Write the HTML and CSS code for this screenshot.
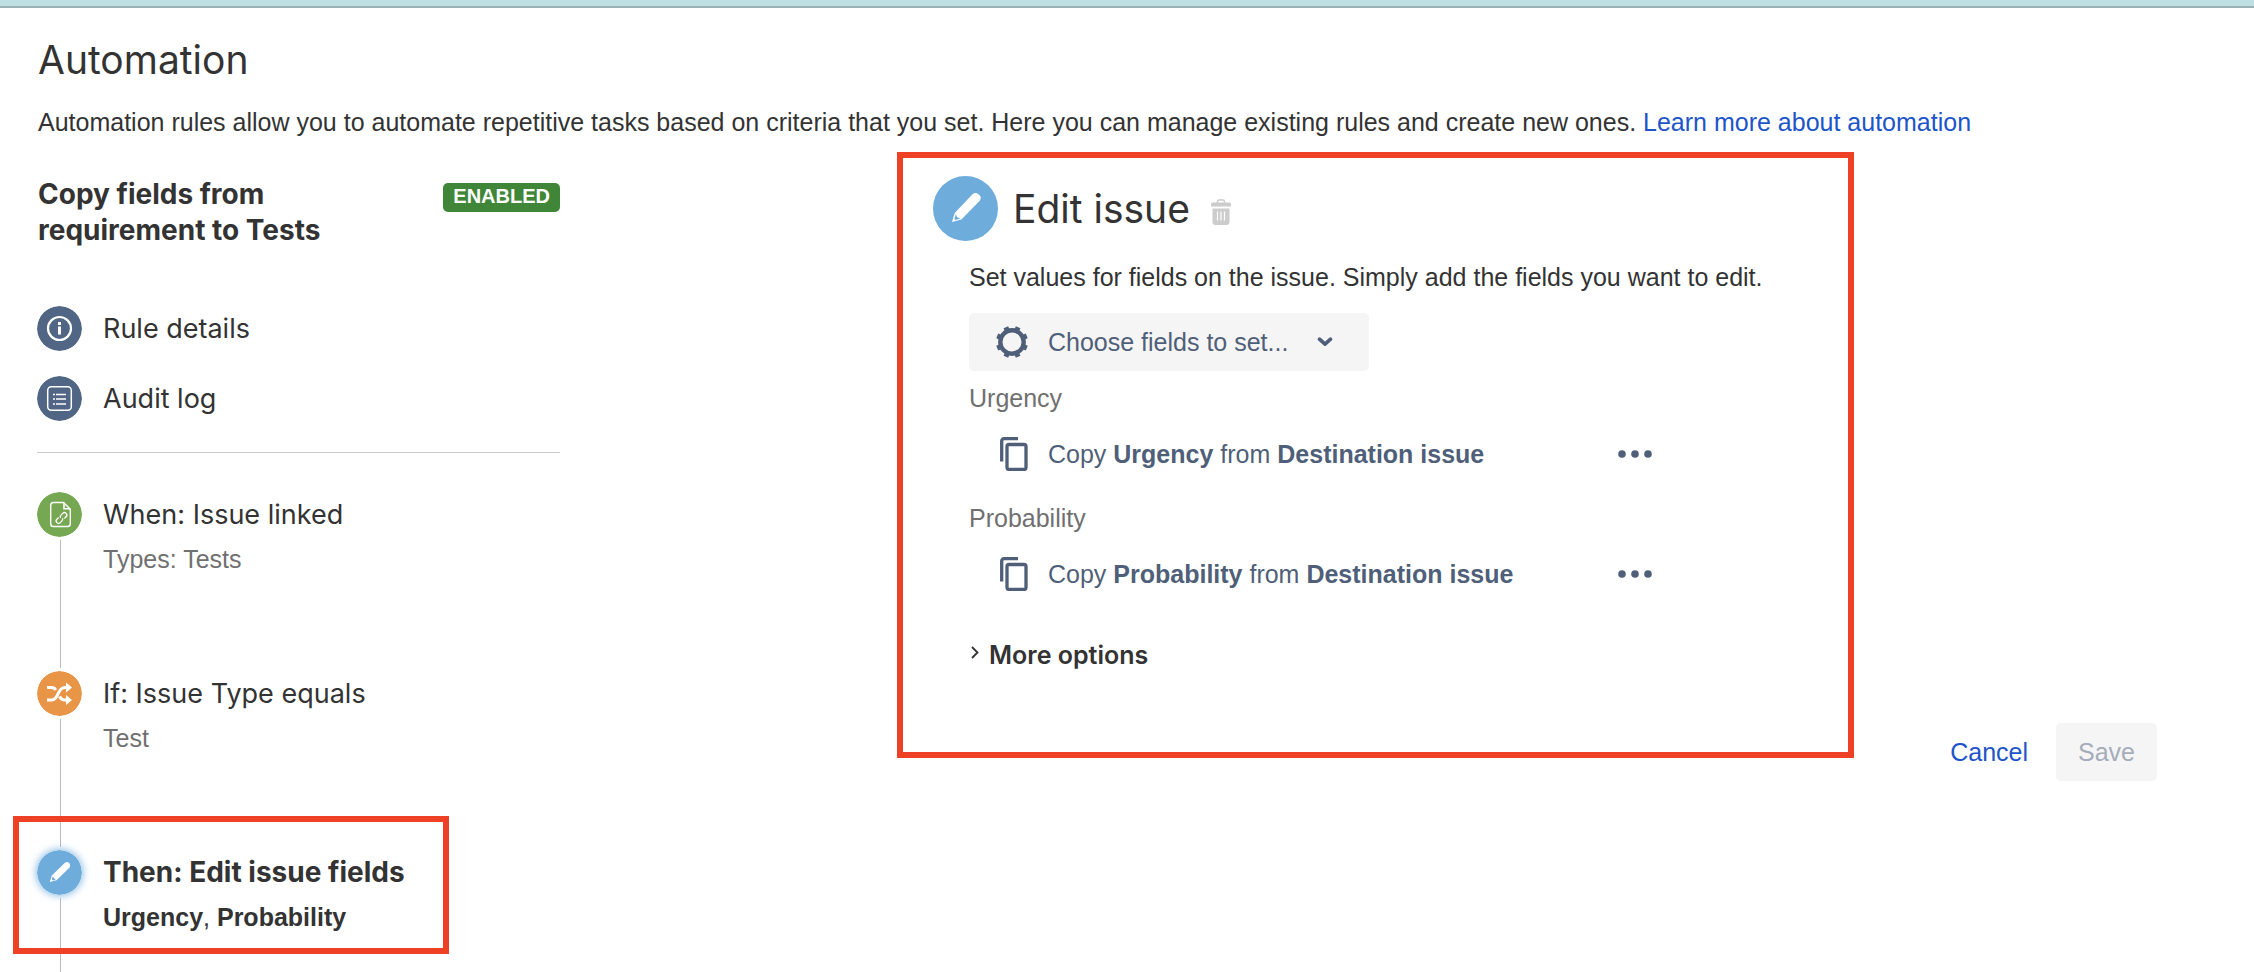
FILE: index.html
```
<!DOCTYPE html>
<html lang="en">
<head>
    <meta charset="UTF-8">
    <meta name="viewport" content="width=device-width, initial-scale=1.0">
    <title>Automation</title>
    <link rel="stylesheet" href="styles.css">
</head>
<body>
    <div class="top-strip"></div>
    <main class="page">
        <h1 class="page-title">Automation</h1>
        <p class="intro">Automation rules allow you to automate repetitive tasks based on criteria that you set. Here you can manage existing rules and create new ones. <a href="#">Learn more about automation</a></p>
        <div class="columns">
            <aside class="sidebar">
                <div class="rule-head">
                    <h2 class="rule-name">Copy fields from requirement to Tests</h2>
                    <span class="badge">ENABLED</span>
                </div>
                <nav class="rule-links">
                    <a class="rule-link" href="#">
                        <svg class="circle-icon" viewBox="0 0 45 45">
                            <circle cx="22.5" cy="22.5" r="22.5" fill="#506684"/>
                            <circle cx="22.5" cy="22.5" r="11.5" fill="none" stroke="#fff" stroke-width="2.2"/>
                            <path d="M21 16h3v3h-3zM21 20.5h3v8h-3z" fill="#fff"/>
                        </svg>
                        <span>Rule details</span>
                    </a>
                    <a class="rule-link" href="#">
                        <svg class="circle-icon" viewBox="0 0 45 45">
                            <circle cx="22.5" cy="22.5" r="22.5" fill="#506684"/>
                            <rect x="10.7" y="10.7" width="23.6" height="23.6" rx="3.5" fill="none" stroke="#fff" stroke-width="1.5"/>
                            <path d="M16 18.5h2M19 18.5h10M16 23h2M19 23h10M16 28h2M19 28h10" stroke="#fff" stroke-width="1.6"/>
                        </svg>
                        <span>Audit log</span>
                    </a>
                </nav>
                <ol class="steps">
                    <li class="step">
                        <div class="step-rail">
                            <svg class="circle-icon" viewBox="0 0 45 45">
                                <circle cx="22.5" cy="22.5" r="22.5" fill="#76a854"/>
                                <path d="M26.5 10.5h-10a2.8 2.8 0 0 0-2.8 2.8v18.4a2.8 2.8 0 0 0 2.8 2.8h14a2.8 2.8 0 0 0 2.8-2.8V17.3z" fill="none" stroke="#fff" stroke-width="1.4"/>
                                <path d="M27 10.5v6.3h6.3" fill="none" stroke="#fff" stroke-width="1.6"/>
                                <g fill="none" stroke="#fff" stroke-width="1.3" transform="rotate(-45 24.5 26)">
                                    <path d="M22.8 23.6h-2.4a2.4 2.4 0 0 0 0 4.8h2.4a2.4 2.4 0 0 0 2.3-1.6"/>
                                    <path d="M26.200 28.4h2.4a2.4 2.4 0 0 0 0-4.8h-2.4a2.4 2.4 0 0 0-2.300 1.600"/>
                                </g>
                            </svg>
                        </div>
                        <div class="step-text">
                            <a class="step-title" href="#">When: Issue linked</a>
                            <p class="step-note">Types: Tests</p>
                        </div>
                    </li>
                    <li class="step">
                        <div class="step-rail">
                            <svg class="circle-icon" viewBox="0 0 45 45">
                                <circle cx="22.5" cy="22.5" r="22.5" fill="#e99548"/>
                                <path d="M10 16.500h4.500c2 0 3.300.8 4.300 2.500M22.500 25.500c1.500 2.800 3 3.500 5.500 3.500h2.500M10 29h4.500c3.500 0 4.800-2.500 6.500-6.200s3.500-6.300 7-6.300h2.500" fill="none" stroke="#fff" stroke-width="3"/>
                                <path d="M29 11.500l6 5-6 5zM29 24l6 5-6 5z" fill="#fff"/>
                            </svg>
                        </div>
                        <div class="step-text">
                            <a class="step-title" href="#">If: Issue Type equals</a>
                            <p class="step-note">Test</p>
                        </div>
                    </li>
                    <li class="step step-active">
                        <div class="step-rail">
                            <svg class="circle-icon" viewBox="0 0 45 45">
                                <circle cx="22.5" cy="22.5" r="22.5" fill="#6eacdc"/>
                                <path d="M28 12.800a3.300 3.300 0 0 1 4.600 4.600L19.500 30.300 12.800 32l2-6.400z" fill="#fff"/>
                                <path d="M15.500 26.600l3.200 3.200-2.700.7-1.200-1.200z" fill="#6eacdc"/>
                            </svg>
                        </div>
                        <div class="step-text">
                            <a class="step-title" href="#">Then: Edit issue fields</a>
                            <p class="step-note"><b>Urgency</b>, <b>Probability</b></p>
                        </div>
                    </li>
                </ol>
            </aside>
            <section class="editor">
                <div class="panel">
                    <header class="panel-head">
                        <svg class="panel-icon" viewBox="0 0 65 65">
                            <circle cx="32.5" cy="32.5" r="32.5" fill="#6eacdc"/>
                            <path d="M39.500 18.200a4.600 4.600 0 0 1 3.300-1.200c1 0 2 .6 3 1.600 1.200 1.200 2 2.200 2 3.300a4.600 4.600 0 0 1-1.300 3L28.400 43.600 19 46l2.700-9z" fill="#fff"/>
                            <path d="M22.900 38.200l1.300 3 3.100 1.400-4.900 1.300-1-1z" fill="#6eacdc"/>
                        </svg>
                        <h2 class="panel-title">Edit issue</h2>
                        <button class="trash-button" type="button" aria-label="Delete">
                            <svg class="trash-icon" viewBox="0 0 20 26">
                                <path d="M6.5 4V2.5A1.5 1.5 0 0 1 8 1h4a1.5 1.5 0 0 1 1.5 1.5V4" fill="none" stroke="#ccc" stroke-width="1.5"/>
                                <path d="M1.5 3.5h17A1.5 1.5 0 0 1 20 5v2.5H0V5a1.5 1.5 0 0 1 1.5-1.5zM1.5 9.5h17V23a3 3 0 0 1-3 3h-11a3 3 0 0 1-3-3z" fill="#ccc"/>
                                <path d="M6.5 12.5v9M10 12.5v9M13.5 12.5v9" stroke="#fff" stroke-width="1.2"/>
                            </svg>
                        </button>
                    </header>
                    <div class="panel-body">
                        <p class="hint">Set values for fields on the issue. Simply add the fields you want to edit.</p>
                        <button class="field-picker" type="button">
                            <svg class="gear-icon" viewBox="0 0 32 32">
                                <circle cx="16" cy="16" r="11.7" fill="none" stroke="#505f79" stroke-width="4.4"/>
                                <g stroke="#505f79" stroke-width="5">
                                    <path d="M16 0v4M16 28v4" transform="rotate(22.5 16 16)"/>
                                    <path d="M16 0v4M16 28v4" transform="rotate(67.5 16 16)"/>
                                    <path d="M16 0v4M16 28v4" transform="rotate(112.5 16 16)"/>
                                    <path d="M16 0v4M16 28v4" transform="rotate(157.5 16 16)"/>
                                </g>
                            </svg>
                            <span class="picker-text">Choose fields to set...</span>
                            <svg class="chevron-icon" viewBox="0 0 16 10">
                                <path d="M2.500 2.200L8 7.200l5.500-5" fill="none" stroke="#505f79" stroke-width="3.600" stroke-linecap="round" stroke-linejoin="round"/>
                            </svg>
                        </button>
                        <h3 class="field-label">Urgency</h3>
                        <div class="field-row">
                            <button class="field-copy" type="button">
                                <svg class="copy-icon" viewBox="0 0 28 34">
                                    <path d="M1.7 24.500V4A2.300 2.300 0 0 1 4 1.700h14" fill="none" stroke="#505f79" stroke-width="3.300"/>
                                    <rect x="7" y="7.500" width="19" height="25" rx="2" fill="none" stroke="#505f79" stroke-width="3.300"/>
                                </svg>
                                <span>Copy <b>Urgency</b> from <b>Destination issue</b></span>
                            </button>
                            <button class="more-button" type="button" aria-label="More actions">
                                <svg class="dots-icon" viewBox="0 0 34 8">
                                    <circle cx="4" cy="4" r="3.8" fill="#505f79"/>
                                    <circle cx="17" cy="4" r="3.8" fill="#505f79"/>
                                    <circle cx="30" cy="4" r="3.8" fill="#505f79"/>
                                </svg>
                            </button>
                        </div>
                        <h3 class="field-label">Probability</h3>
                        <div class="field-row">
                            <button class="field-copy" type="button">
                                <svg class="copy-icon" viewBox="0 0 28 34">
                                    <path d="M1.7 24.500V4A2.300 2.300 0 0 1 4 1.700h14" fill="none" stroke="#505f79" stroke-width="3.300"/>
                                    <rect x="7" y="7.500" width="19" height="25" rx="2" fill="none" stroke="#505f79" stroke-width="3.300"/>
                                </svg>
                                <span>Copy <b>Probability</b> from <b>Destination issue</b></span>
                            </button>
                            <button class="more-button" type="button" aria-label="More actions">
                                <svg class="dots-icon" viewBox="0 0 34 8">
                                    <circle cx="4" cy="4" r="3.8" fill="#505f79"/>
                                    <circle cx="17" cy="4" r="3.8" fill="#505f79"/>
                                    <circle cx="30" cy="4" r="3.8" fill="#505f79"/>
                                </svg>
                            </button>
                        </div>
                        <button class="more-options" type="button">
                            <svg class="caret-icon" viewBox="0 0 8 18">
                                <path d="M1 1l5.500 5.500L1 12" fill="none" stroke="#333" stroke-width="1.800"/>
                            </svg>
                            <span>More options</span>
                        </button>
                    </div>
                </div>
                <div class="actions">
                    <button class="action-button cancel-button" type="button">Cancel</button>
                    <button class="action-button save-button" type="button" disabled>Save</button>
                </div>
            </section>
        </div>
    </main>
</body>
</html>
```
FILE: styles.css
```
*,
*::before,
*::after {
    box-sizing: border-box;
}
body {
    margin: 0;
    background-color: #fff;
    color: #333;
    font-family: "Liberation Sans", Arial, sans-serif;
    font-size: 25px;
    line-height: 36px;
}
h1, h2, h3, p, ol {
    margin: 0;
    padding: 0;
}
a {
    color: #1d55c9;
    text-decoration: none;
}
button {
    display: flex;
    align-items: center;
    border: 0;
    padding: 0;
    background: none;
    color: inherit;
    font: inherit;
    cursor: pointer;
}
svg {
    display: block;
    flex: none;
}
.top-strip {
    height: 8px;
    background-color: #bee0e2;
    border-bottom: 2px solid #9ab4b6;
}
.page {
    padding: 28px 97px 0 38px;
}
.page-title,
.panel-title {
    font-family: Inter, sans-serif;
    font-size: 39px;
    font-weight: 400;
    line-height: 48px;
}
.intro {
    margin-top: 20px;
}
.columns {
    display: flex;
    align-items: flex-start;
}
/* Left column: rule name, links and the chain of steps */
.sidebar {
    flex: none;
    width: 522px;
    margin-right: 337px;
    padding-top: 36px;
}
.rule-head {
    display: flex;
    justify-content: space-between;
    align-items: flex-start;
}
.rule-name {
    width: 320px;
    font-family: Inter, sans-serif;
    font-size: 28px;
    font-weight: 700;
    line-height: 36px;
}
.badge {
    margin-top: 7px;
    padding: 0 10px 2px;
    border-radius: 5px;
    background-color: #3f8638;
    color: #fff;
    font-size: 20px;
    font-weight: 700;
    line-height: 27px;
}
.rule-links,
.steps {
    margin-left: -1px;
}
.rule-links {
    display: flex;
    flex-direction: column;
    gap: 25px;
    padding: 58px 0 31px;
    border-bottom: 1px solid #ccc;
}
.rule-link {
    display: flex;
    align-items: center;
    gap: 21px;
    color: #333;
    font-family: Inter, sans-serif;
    font-size: 27px;
}
.circle-icon {
    width: 45px;
    height: 45px;
    border-radius: 50%;
}
.steps {
    list-style: none;
    padding-top: 39px;
}
.step {
    display: flex;
    gap: 21px;
    min-height: 179px;
}
.step:last-child {
    min-height: 122px;
}
.step-rail {
    display: flex;
    flex-direction: column;
    align-items: center;
    gap: 3px;
}
/* Line that leads down to the next step */
.step-rail::after {
    content: "";
    flex: 1;
    width: 1px;
    margin: 0 0 3px 2px;
    background-color: #bbb;
}
.step:last-child .step-rail::after {
    margin-bottom: 0;
}
.step-title {
    display: block;
    color: #333;
    font-family: Inter, sans-serif;
    font-size: 27px;
    line-height: 45px;
}
.step-note {
    color: #707070;
    line-height: 44px;
}
.step-active {
    position: relative;
}
/* Red frame drawn over the step and its line */
.step-active::before {
    content: "";
    position: absolute;
    top: -34px;
    left: -24px;
    width: 436px;
    height: 138px;
    border: 6px solid #ee4024;
    pointer-events: none;
}
.step-active .circle-icon {
    box-shadow: 0 0 9px #6eacdc;
}
.step-active .step-title {
    font-size: 28px;
    font-weight: 700;
}
.step-active .step-note {
    color: #333;
}
/* Right column: the form for the selected step */
.editor {
    display: flex;
    flex: 1;
    align-items: flex-end;
    gap: 74px;
    padding-top: 12px;
}
.panel {
    flex: 1;
    margin-bottom: 23px;
    padding: 18px 30px 79px;
    border: 6px solid #ee4024;
}
.panel-head {
    display: flex;
    align-items: center;
    gap: 15px;
}
.panel-icon {
    width: 65px;
    height: 65px;
}
.trash-button {
    margin: 6px 0 0 6px;
}
.trash-icon {
    width: 20px;
    height: 26px;
}
.panel-body {
    padding: 18px 0 0 36px;
}
.field-picker {
    height: 58px;
    margin: 18px 0 9px;
    padding: 0 36px 0 27px;
    border-radius: 5px;
    background-color: #f5f5f5;
    color: #505f79;
}
.picker-text {
    margin: 0 29px 0 20px;
}
.gear-icon {
    width: 32px;
    height: 32px;
}
.chevron-icon {
    width: 16px;
    height: 10px;
}
.field-label {
    color: #707070;
    font-size: 25px;
    font-weight: 400;
}
.field-row {
    display: flex;
    justify-content: space-between;
    margin: 9px 0 17px;
    padding: 0 166px 0 31px;
    color: #505f79;
}
.field-copy {
    gap: 20px;
    height: 58px;
}
.copy-icon {
    width: 28px;
    height: 34px;
}
.dots-icon {
    width: 34px;
    height: 8px;
}
.more-options {
    gap: 10px;
    margin-top: 34px;
    padding-left: 2px;
    font-family: Inter, sans-serif;
    font-size: 25px;
    font-weight: 600;
}
.caret-icon {
    width: 8px;
    height: 18px;
}
.actions {
    display: flex;
    flex: none;
    gap: 6px;
}
.action-button {
    height: 58px;
    padding: 0 22px;
    border-radius: 5px;
}
.cancel-button {
    color: #1d55c9;
}
.save-button {
    background-color: #f5f5f5;
    color: #a5adba;
    cursor: default;
}
```
